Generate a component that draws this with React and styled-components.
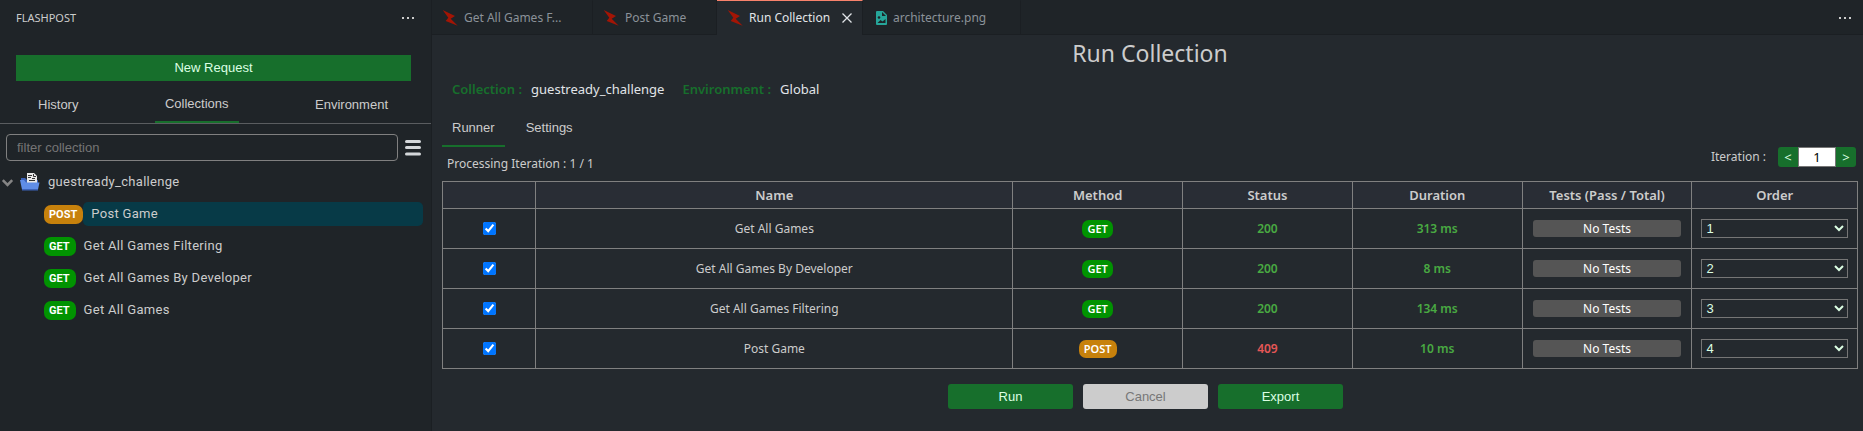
import React from "react";
import styled, { createGlobalStyle } from "styled-components";

const Global = createGlobalStyle`
  *, *::before, *::after { box-sizing: border-box; }
  body { margin: 0; background: #24292e; color: #cccccc; font: 13px/16px "Noto Sans", sans-serif; }
  button, input, select { font: inherit; margin: 0; }
  button { border: 0; padding: 0; background: none; color: inherit; cursor: pointer; }
  h1, h2, ul { margin: 0; padding: 0; font-weight: 400; }
  ul { list-style: none; }
`;

const Shell = styled.div`
  display: grid;
  grid-template-columns: 432px minmax(0, 1fr);
  min-height: 100vh;
`;

const Sidebar = styled.aside`
  background: #1f2428;
  border-right: 1px solid #1b1f23;
`;

const SideHeader = styled.header`
  display: flex;
  align-items: center;
  justify-content: space-between;
  height: 35px;
  padding: 0 15px 0 16px;
`;

const SideTitle = styled.h2`
  font-size: 11px;
  line-height: 16px;
`;

const IconButton = styled.button`
  display: flex;
  flex: none;
`;

const NewRequest = styled.button`
  display: block;
  width: calc(100% - 36px);
  height: 26px;
  margin: 20px 20px 0 16px;
  background: #176f2c;
  color: #dcffe4;
  font: 13px/16px "Liberation Sans", sans-serif;
`;

const SideTabs = styled.nav`
  display: flex;
  justify-content: space-between;
  align-items: flex-end;
  padding: 0 33px 0 28px;
  margin-top: 8px;
  border-bottom: 1px solid #5a5d60;
`;

const SideTab = styled.button`
  height: 34px;
  padding: 0 10px 2px;
  border-bottom: ${(p) => (p.$active ? "2px solid #176f2c" : "0")};
  font: 13px/16px "Liberation Sans", sans-serif;
`;

const FilterRow = styled.div`
  display: flex;
  align-items: center;
  gap: 7px;
  padding: 10px 10px 0 6px;
`;

const Filter = styled.input`
  flex: 1;
  min-width: 0;
  height: 27px;
  padding: 0 10px;
  border: 1px solid #808080;
  border-radius: 4px;
  background: transparent;
  color: #cccccc;
  font: 13px/16px "Liberation Sans", sans-serif;
  &::placeholder { color: #757575; }
`;

const Folder = styled.button`
  display: flex;
  align-items: center;
  gap: 4px;
  height: 24px;
  margin-top: 9px;
  font: 13px/16px Roboto, sans-serif;
  letter-spacing: 0.3px;
`;

const FolderName = styled.span`
  margin-left: 4px;
`;

const RequestList = styled.ul`
  padding: 8px 8px 0 44px;
`;

const RequestItem = styled.li`
  display: flex;
  align-items: center;
  height: 24px;
  margin-bottom: 8px;
`;

const RequestLink = styled.a`
  flex: 1;
  height: 24px;
  padding-left: 8px;
  border-radius: 5px;
  background: ${(p) => (p.$active ? "#073a47" : "transparent")};
  color: #cccccc;
  font: 13px/24px Roboto, sans-serif;
  letter-spacing: 0.3px;
  text-decoration: none;
`;

const Badge = styled.span`
  display: inline-block;
  padding: ${(p) => (p.$side ? "0 6px 0 5px" : "0 5px")};
  border-radius: 7px;
  background: ${(p) => (p.$method === "POST" ? "#c7810c" : "#019301")};
  color: #ffffff;
  font: ${(p) => (p.$side ? "700 11px/19px Roboto" : "600 11px/18px \"Noto Sans\"")}, sans-serif;
`;

const Main = styled.main`
  min-width: 0;
`;

const EditorTabs = styled.nav`
  display: flex;
  height: 35px;
  background: #1f2428;
  box-shadow: inset 0 -1px #1b1f23;
`;

const EditorTab = styled.button`
  display: flex;
  align-items: center;
  gap: 4px;
  width: ${(p) => p.$width}px;
  padding: 0 9px 0 10px;
  border-right: 1px solid #1b1f23;
  border-top: 1px solid ${(p) => (p.$active ? "#f9826c" : "transparent")};
  background: ${(p) => (p.$active ? "#24292e" : "transparent")};
  color: ${(p) => (p.$active ? "#e1e4e8" : "#8b9299")};
  font-size: 12px;
  white-space: nowrap;
`;

const CloseIcon = styled.svg`
  margin-left: auto;
`;

const TabsMenu = styled.div`
  display: flex;
  align-items: center;
  margin-left: auto;
  padding-right: 10px;
`;

const Page = styled.section`
  padding: 4px 5px 0 10px;
`;

const Title = styled.h1`
  font: 400 23px/28px "Noto Sans", sans-serif;
  text-align: center;
`;

const Meta = styled.div`
  display: flex;
  gap: 18px;
  padding: 14px 10px 0;
  font-size: 13px;
  color: #e1e4e8;
`;

const MetaLabel = styled.span`
  margin-right: 9px;
  color: #176f2c;
  font-weight: 600;
`;

const PageTabs = styled.nav`
  display: flex;
  gap: 11px;
  margin-top: 16px;
`;

const PageTab = styled.button`
  height: 34px;
  padding: 0 10px 2px;
  border-bottom: 2px solid ${(p) => (p.$active ? "#176f2c" : "transparent")};
  font: 13px/16px "Liberation Sans", sans-serif;
`;

const StatusRow = styled.div`
  display: flex;
  justify-content: space-between;
  align-items: flex-start;
  padding: 0 2px 0 5px;
  font-size: 12px;
`;

const Progress = styled.span`
  padding-top: 9px;
`;

const Iteration = styled.div`
  display: flex;
  align-items: center;
  label { margin-right: 12px; }
`;

const Step = styled.button`
  width: 20px;
  height: 20px;
  border-radius: ${(p) => (p.$end ? "0 3px 3px 0" : "3px 0 0 3px")};
  background: #176f2c;
  color: #dcffe4;
  font-size: 13px;
`;

const Count = styled.input`
  width: 38px;
  height: 20px;
  padding: 0;
  border: 1px solid #767676;
  background: #ffffff;
  color: #000000;
  font-size: 13px;
  text-align: center;
`;

const Table = styled.table`
  width: 100%;
  margin-top: 9px;
  border-collapse: collapse;
  table-layout: fixed;
  font-size: 12px;
  text-align: center;
  th, td { border: 1px solid #808080; padding: 0 9px; }
  th { height: 27px; background: #292d35; font-size: 13px; font-weight: 600; }
  td { height: 40px; }
`;

const Col = styled.col`
  width: ${(p) => p.$w}%;
`;

const Check = styled.input`
  display: block;
  width: 13px;
  height: 13px;
  margin: 0 auto;
`;

const Result = styled.span`
  color: ${(p) => (p.$bad ? "#e65757" : "#49a942")};
  font-weight: 600;
`;

const NoTests = styled.div`
  margin: 0 1px;
  border-radius: 3px;
  background: #555555;
  color: #ffffff;
  line-height: 17px;
`;

const Order = styled.select`
  display: block;
  width: 100%;
  height: 19px;
  border: 1px solid #767676;
  background: #24292e;
  color: #dcffe4;
  font: 13px/16px "Liberation Sans", sans-serif;
`;

const Actions = styled.div`
  display: flex;
  justify-content: center;
  gap: 10px;
  padding: 15px 9px 20px 0;
`;

const Action = styled.button`
  width: 125px;
  height: 25px;
  border-radius: 3px;
  background: #176f2c;
  color: #dcffe4;
  font: 13px/16px "Liberation Sans", sans-serif;
  &:disabled { background: #cccccc; color: #777777; }
`;

const Dots = () => (
  <svg width="16" height="16" fill="#cccccc" aria-hidden="true">
    <path d="M2 7h2v2H2zM7 7h2v2H7zM12 7h2v2h-2z" />
  </svg>
);

const Bolt = () => (
  <svg width="18" height="18" viewBox="0 0 18 18" fill="#a31505" aria-hidden="true">
    <path d="M.7 1 13 7 8.700 9.700 15.700 16.700 3.700 12 6.300 8.700z" />
  </svg>
);

const ImageFile = () => (
  <svg width="16" height="16" viewBox="0 0 16 16" aria-hidden="true">
    <path fill="#26a69a" d="M4 1h6l4 4v9a1 1 0 0 1-1 1H4a1 1 0 0 1-1-1V2a1 1 0 0 1 1-1z" />
    <path fill="#1f2428" d="M9 2v4h4zM4.500 13h8V9L9.500 11.500 7.500 10z" />
    <circle cx="6" cy="7.500" r="1.300" fill="#1f2428" />
  </svg>
);

const Close = () => (
  <CloseIcon width="12" height="12" viewBox="0 0 12 12" stroke="#e1e4e8" strokeWidth="1.300" aria-hidden="true">
    <path d="M1.500 1.500l9 9M10.500 1.500l-9 9" />
  </CloseIcon>
);

const Menu = () => (
  <svg width="16" height="18" viewBox="0 0 16 18" stroke="#d4d7da" strokeWidth="3" strokeLinecap="round" aria-hidden="true">
    <path d="M1.500 2.500h13M1.500 8.500h13M1.500 15h13" />
  </svg>
);

const Chevron = () => (
  <svg width="16" height="16" viewBox="0 0 16 16" fill="none" stroke="#858585" strokeWidth="2.600" aria-hidden="true">
    <path d="M2.800 6.200l4.700 4.700 4.700-4.700" />
  </svg>
);

const FolderIcon = () => (
  <svg width="20" height="18" viewBox="0 0 20 18" aria-hidden="true">
    <path fill="#3c62b8" d="M1 5h4l2 2h11v4H1z" />
    <path fill="#e8e8e8" d="M7 0h7l3 3v7H7z" />
    <path stroke="#333" fill="none" d="M8 2.500h4M8 4.500h3M12 5.500h3M9 7.500h6M13.500 1v2.500H16" />
    <path fill="#5f8de8" d="M0 7h4l2 2.500H19.500l-1.500 7H2z" />
    <path fill="#3c62b8" d="M2 16h16v1.500H2z" />
  </svg>
);

const requests = [
  ["POST", "Post Game"],
  ["GET", "Get All Games Filtering"],
  ["GET", "Get All Games By Developer"],
  ["GET", "Get All Games"],
];

const runs = [
  { name: "Get All Games", method: "GET", status: 200, time: "313 ms" },
  { name: "Get All Games By Developer", method: "GET", status: 200, time: "8 ms" },
  { name: "Get All Games Filtering", method: "GET", status: 200, time: "134 ms" },
  { name: "Post Game", method: "POST", status: 409, time: "10 ms" },
];

const columns = [
  ["", 6.6], ["Name", 33.7], ["Method", 12], ["Status", 12], ["Duration", 12], ["Tests (Pass / Total)", 12], ["Order", 11.7],
];

export default function App() {
  return (
    <Shell>
      <Global />
      <Sidebar>
        <SideHeader>
          <SideTitle>FLASHPOST</SideTitle>
          <IconButton aria-label="More actions"><Dots /></IconButton>
        </SideHeader>
        <NewRequest>New Request</NewRequest>
        <SideTabs>
          <SideTab>History</SideTab>
          <SideTab $active>Collections</SideTab>
          <SideTab>Environment</SideTab>
        </SideTabs>
        <FilterRow>
          <Filter placeholder="filter collection" aria-label="filter collection" />
          <IconButton aria-label="Collection menu"><Menu /></IconButton>
        </FilterRow>
        <Folder>
          <Chevron />
          <FolderIcon />
          <FolderName>guestready_challenge</FolderName>
        </Folder>
        <RequestList>
          {requests.map(([method, name], i) => (
            <RequestItem key={name}>
              <Badge $side $method={method}>{method}</Badge>
              <RequestLink href="#" $active={i === 0}>{name}</RequestLink>
            </RequestItem>
          ))}
        </RequestList>
      </Sidebar>
      <Main>
        <EditorTabs>
          <EditorTab $width={161}><Bolt />Get All Games F...</EditorTab>
          <EditorTab $width={124}><Bolt />Post Game</EditorTab>
          <EditorTab $width={146} $active><Bolt />Run Collection<Close /></EditorTab>
          <EditorTab $width={158}><ImageFile />architecture.png</EditorTab>
          <TabsMenu><IconButton aria-label="More editor actions"><Dots /></IconButton></TabsMenu>
        </EditorTabs>
        <Page>
          <Title>Run Collection</Title>
          <Meta>
            <div><MetaLabel>Collection :</MetaLabel>guestready_challenge</div>
            <div><MetaLabel>Environment :</MetaLabel>Global</div>
          </Meta>
          <PageTabs>
            <PageTab $active>Runner</PageTab>
            <PageTab>Settings</PageTab>
          </PageTabs>
          <StatusRow>
            <Progress>Processing Iteration : 1 / 1</Progress>
            <Iteration>
              <label htmlFor="iteration">Iteration :</label>
              <Step aria-label="Fewer iterations">&lt;</Step>
              <Count id="iteration" defaultValue="1" />
              <Step $end aria-label="More iterations">&gt;</Step>
            </Iteration>
          </StatusRow>
          <Table>
            <colgroup>{columns.map(([label, w]) => <Col key={label} $w={w} />)}</colgroup>
            <thead>
              <tr>{columns.map(([label]) => <th key={label} scope="col">{label}</th>)}</tr>
            </thead>
            <tbody>
              {runs.map((r, i) => (
                <tr key={r.name}>
                  <td><Check type="checkbox" defaultChecked aria-label={r.name} /></td>
                  <td>{r.name}</td>
                  <td><Badge $method={r.method}>{r.method}</Badge></td>
                  <td><Result $bad={r.status >= 400}>{r.status}</Result></td>
                  <td><Result>{r.time}</Result></td>
                  <td><NoTests>No Tests</NoTests></td>
                  <td>
                    <Order defaultValue={i + 1} aria-label={`Order of ${r.name}`}>
                      {runs.map((_, n) => <option key={n} value={n + 1}>{n + 1}</option>)}
                    </Order>
                  </td>
                </tr>
              ))}
            </tbody>
          </Table>
          <Actions>
            <Action>Run</Action>
            <Action disabled>Cancel</Action>
            <Action>Export</Action>
          </Actions>
        </Page>
      </Main>
    </Shell>
  );
}
